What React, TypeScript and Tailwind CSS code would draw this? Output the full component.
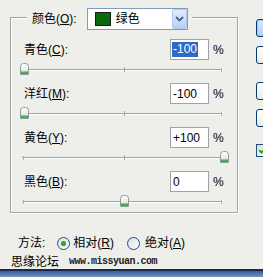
import React from "react";

const BG = "bg-[#eeeeea]";

function Lbl({ text, k, colon = true }: { text: string; k: string; colon?: boolean }) {
  return (
    <span className="whitespace-nowrap">
      {text}(<span className="underline underline-offset-[1px]">{k}</span>){colon ? ":" : ""}
    </span>
  );
}

function Thumb() {
  return (
    <svg width="9" height="12" viewBox="0 0 9 12">
      <defs>
        <linearGradient id="tg" x1="0" y1="0" x2="0" y2="1">
          <stop offset="0" stopColor="#ffffff" />
          <stop offset="1" stopColor="#dcdcd4" />
        </linearGradient>
      </defs>
      <path d="M0.5 3.5 Q0.5 0.5 3.5 0.5 H5.5 Q8.5 0.5 8.5 3.5 V11.5 H0.5 Z" fill="url(#tg)" stroke="#8c9aa4" />
      <rect x="1" y="8.5" width="7" height="2.5" fill="#3cb43c" />
    </svg>
  );
}

function Slider({ frac }: { frac: number }) {
  return (
    <div className="relative ml-[9px] w-[209px] h-[23px] shrink-0">
      <div className="absolute left-[2px] top-[9px] w-[200px] h-[2px] border-t border-[#a3a3a3] bg-white" />
      <div className="absolute left-[3px] top-[8px] w-px h-[4px] bg-[#b0b0b0]" />
      <div className="absolute left-[104px] top-[7px] w-px h-[5px] bg-[#a3a3a3]" />
      <div className="absolute left-[201px] top-[8px] w-px h-[4px] bg-[#b0b0b0]" />
      <div className="absolute top-[3px] leading-none" style={{ left: Math.round(frac * 200) }}>
        <Thumb />
      </div>
    </div>
  );
}

function Block({ text, k, value, selected, frac }: { text: string; k: string; value: string; selected?: boolean; frac: number }) {
  return (
    <>
      <div className="flex items-center h-[21px] pl-[13px] shrink-0">
        <span className="flex-1">
          <Lbl text={text} k={k} />
        </span>
        <div className="w-[39px] h-[21px] border border-[#9ea3a8] bg-white flex items-center pl-[1px]">
          {selected ? (
            <span className="bg-[#316ac5] text-white px-[1px] leading-[15px]">{value}</span>
          ) : (
            <span className="pl-[1px]">{value}</span>
          )}
        </div>
        <span className="ml-[4px] w-[24px]">%</span>
      </div>
      <Slider frac={frac} />
    </>
  );
}

function Radio({ checked }: { checked?: boolean }) {
  return (
    <svg width="13" height="13" viewBox="0 0 13 13" className="shrink-0">
      <defs>
        <linearGradient id="rg" x1="0" y1="0" x2="1" y2="1">
          <stop offset="0" stopColor="#dcdcd6" />
          <stop offset="1" stopColor="#ffffff" />
        </linearGradient>
      </defs>
      <circle cx="6.5" cy="6.5" r="6" fill="url(#rg)" stroke="#1c5180" />
      {checked && <circle cx="6.5" cy="6.5" r="2.6" fill="#2ea82e" />}
    </svg>
  );
}

function XpButton({ def }: { def?: boolean }) {
  return (
    <div
      className={
        "w-[75px] h-[18px] rounded-[3px] border border-[#003c74] " +
        (def
          ? "bg-gradient-to-b from-[#dbe8fb] to-[#b6cef4] shadow-[inset_0_0_0_1px_#a9c6f3]"
          : "bg-gradient-to-b from-[#ffffff] to-[#ecebe6]")
      }
    />
  );
}

export default function App() {
  return (
    <div
      className={
        "w-[263px] h-[277px] overflow-hidden flex flex-col text-[12px] leading-[14px] text-black " +
        BG +
        " font-['Liberation_Sans','Noto_Sans_CJK_SC',sans-serif]"
      }
    >
      <div className="flex h-[254px] shrink-0">
        <div className="w-[256px] shrink-0 pl-[10px] pt-[17px] flex flex-col">
          <div className="w-[228px] h-[196px] shrink-0 border border-[#a3a3a3] shadow-[inset_1px_1px_0_#ffffff,1px_1px_0_#ffffff] flex flex-col">
            <div className={"-mt-[10px] ml-[16px] self-start flex items-center h-[22px] pl-[5px] pr-[4px] shrink-0 " + BG}>
              <Lbl text="颜色" k="O" />
              <div className="ml-[10px] w-[101px] h-[22px] border border-[#7f9db9] bg-white flex items-center pl-[7px]">
                <div className="w-[16px] h-[14px] bg-[#0a6a0a] border border-[#1a1a1a]" />
                <span className="ml-[5px]">绿色</span>
                <div className="ml-auto w-[15px] h-[20px] rounded-[2px] border border-[#b2c8f2] bg-gradient-to-b from-[#e2ecfe] to-[#b8cef7] flex items-center justify-center">
                  <svg width="9" height="6" viewBox="0 0 9 6">
                    <path d="M1 1 L4.5 4.5 L8 1" fill="none" stroke="#4d6185" strokeWidth="1.8" />
                  </svg>
                </div>
              </div>
            </div>
            <div className="mt-[9px] flex flex-col">
              <Block text="青色" k="C" value="-100" selected frac={0} />
              <Block text="洋红" k="M" value="-100" frac={0} />
              <Block text="黄色" k="Y" value="+100" frac={1} />
              <Block text="黑色" k="B" value="0" frac={0.5} />
            </div>
          </div>
          <div className="mt-[23px] h-[14px] flex items-center pl-[8px] shrink-0">
            <span>方法:</span>
            <span className="ml-[12px] flex">
              <Radio checked />
            </span>
            <span className="ml-[3px]">
              <Lbl text="相对" k="R" colon={false} />
            </span>
            <span className="ml-[13px] flex">
              <Radio />
            </span>
            <span className="ml-[5px]">
              <Lbl text="绝对" k="A" colon={false} />
            </span>
          </div>
        </div>
        <div className="w-[75px] shrink-0 pt-[19px] flex flex-col">
          <XpButton def />
          <div className="mt-[9px]">
            <XpButton />
          </div>
          <div className="mt-[18px]">
            <XpButton />
          </div>
          <div className="mt-[9px]">
            <XpButton />
          </div>
          <div className="mt-[17px] w-[13px] h-[13px] border border-[#1c5180] bg-gradient-to-br from-[#dcdcd6] to-white flex items-center justify-center">
            <svg width="9" height="9" viewBox="0 0 9 9">
              <path d="M1.2 4.2 L3.5 6.6 L7.8 1.8" fill="none" stroke="#21a121" strokeWidth="1.8" />
            </svg>
          </div>
        </div>
      </div>
      <div className="h-[15px] shrink-0 flex items-center pl-[11px]">
        <span className="text-[12px]">思缘论坛</span>
        <span className="ml-[10px] text-[10px] font-bold tracking-[-0.5px] text-[#222] font-['Liberation_Mono',monospace]">
          www.missyuan.com
        </span>
      </div>
      <div className="flex-1 border-t-2 border-[#1b2a4c] bg-gradient-to-b from-[#3c5c98] to-[#7592c4]" />
    </div>
  );
}
